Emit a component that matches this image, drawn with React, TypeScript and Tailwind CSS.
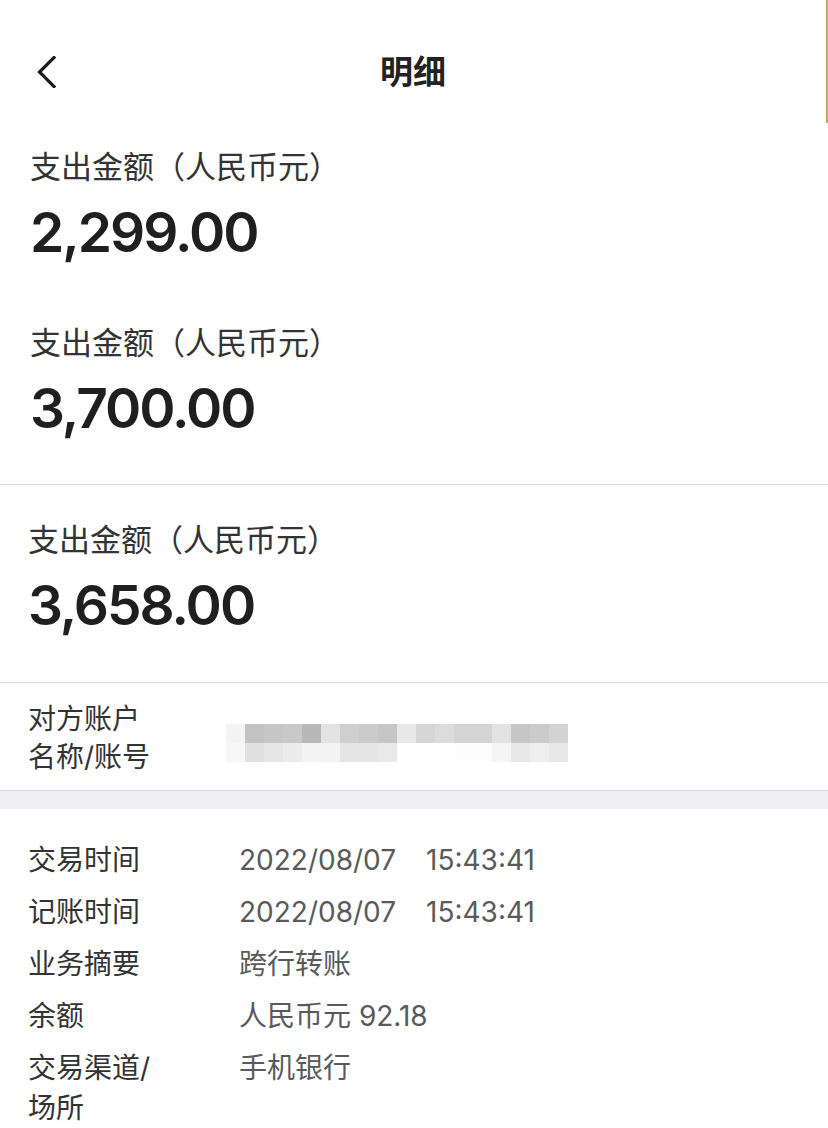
import React from 'react';

const mosaicTop = [
  'bg-[#f4f4f4]', 'bg-[#c2c2c2]', 'bg-[#c6c6c6]', 'bg-[#c9c9c9]', 'bg-[#b8b8b8]', 'bg-[#e3e3e3]',
  'bg-[#cfcfcf]', 'bg-[#cbcbcb]', 'bg-[#c6c6c6]', 'bg-[#e8e8e8]', 'bg-[#d6d6d6]', 'bg-[#dcdcdc]',
  'bg-[#d4d4d4]', 'bg-[#d4d4d4]', 'bg-[#e3e3e3]', 'bg-[#c6c6c6]', 'bg-[#cbcbcb]', 'bg-[#d3d3d3]',
];
const mosaicBottom = [
  'bg-[#f7f7f7]', 'bg-[#e0e0e0]', 'bg-[#e6e6e6]', 'bg-[#ececec]', 'bg-[#f3f3f3]', 'bg-[#f4f4f4]',
  'bg-[#e5e5e5]', 'bg-[#e5e5e5]', 'bg-[#e9e9e9]', 'bg-white', 'bg-white', 'bg-white',
  'bg-[#fdfdfd]', 'bg-[#fdfdfd]', 'bg-[#f5f5f5]', 'bg-[#e8e8e8]', 'bg-[#eeeeee]', 'bg-[#e8e8e8]',
];

const amounts = [
  { value: '2,299.00', cls: 'px-[30px] pt-[27px] pb-[32px]' },
  { value: '3,700.00', cls: 'px-[30px] pt-[27px] pb-[44px] border-b border-[#d9d9d9]' },
  { value: '3,658.00', cls: 'px-[28px] pt-[35px] pb-[45px] border-b border-[#d9d9d9]' },
];

const details: { label: string[]; value: React.ReactNode }[] = [
  {
    label: ['交易时间'],
    value: (
      <>
        <span>2022/08/07</span>
        <span className="ml-[30px]">15:43:41</span>
      </>
    ),
  },
  {
    label: ['记账时间'],
    value: (
      <>
        <span>2022/08/07</span>
        <span className="ml-[30px]">15:43:41</span>
      </>
    ),
  },
  { label: ['业务摘要'], value: '跨行转账' },
  { label: ['余额'], value: '人民币元 92.18' },
  { label: ['交易渠道/', '场所'], value: '手机银行' },
];

export default function App() {
  return (
    <div className="relative w-[828px] min-h-[1128px] bg-white font-['Inter','Noto_Sans_CJK_SC',sans-serif] text-[#222]">
      {/* gold edge of the neighbouring screen */}
      <div className="absolute right-0 top-0 w-[2px] h-[123px] bg-[#bcab5e]" />

      {/* Header */}
      <header className="h-[120px] pt-[24px]">
        <div className="grid grid-cols-[1fr_auto_1fr] items-center h-[96px]">
          <div className="pl-[36px] flex items-center">
            <svg width="20" height="32" viewBox="0 0 20 32" fill="none">
              <path d="M18 1.5 L3.5 16 L18 30.5" stroke="#1c1c1c" strokeWidth="3.2" strokeLinecap="square" strokeLinejoin="miter" />
            </svg>
          </div>
          <h1 className="text-[33px] font-semibold text-[#222] leading-[40px] mr-[2px]">明细</h1>
          <div />
        </div>
      </header>

      {/* Amounts */}
      {amounts.map(a => (
        <section key={a.value} className={a.cls}>
          <div className="text-[31px] leading-[40px] text-[#333]">支出金额（人民币元）</div>
          <div className="mt-[13px] text-[55px] leading-[64px] font-semibold text-[#1f1f1f] tracking-[-2px]">
            {a.value}
          </div>
        </section>
      ))}

      {/* Counterparty */}
      <section className="flex items-center px-[28px] pt-[17px] pb-[14px] border-b border-[#d9d9d9]">
        <div className="w-[198px] text-[28px] leading-[38px] text-[#333]">
          <div>对方账户</div>
          <div>名称/账号</div>
        </div>
        <div className="mt-[10px] flex flex-col">
          <div className="flex">
            {mosaicTop.map((c, i) => (
              <div key={i} className={`w-[19px] h-[19px] ${c}`} />
            ))}
          </div>
          <div className="flex">
            {mosaicBottom.map((c, i) => (
              <div key={i} className={`w-[19px] h-[19px] ${c}`} />
            ))}
          </div>
        </div>
      </section>

      <div className="h-[18px] bg-[#efeff4]" />

      {/* Details */}
      <section className="px-[28px] pt-[31px] flex flex-col gap-[12px]">
        {details.map(d => (
          <div key={d.label.join('')} className="flex text-[28px] leading-[40px]">
            <div className="w-[211px] text-[#333]">
              {d.label.map(l => (
                <div key={l}>{l}</div>
              ))}
            </div>
            <div className="text-[#5a5a5a]">{d.value}</div>
          </div>
        ))}
      </section>
    </div>
  );
}
